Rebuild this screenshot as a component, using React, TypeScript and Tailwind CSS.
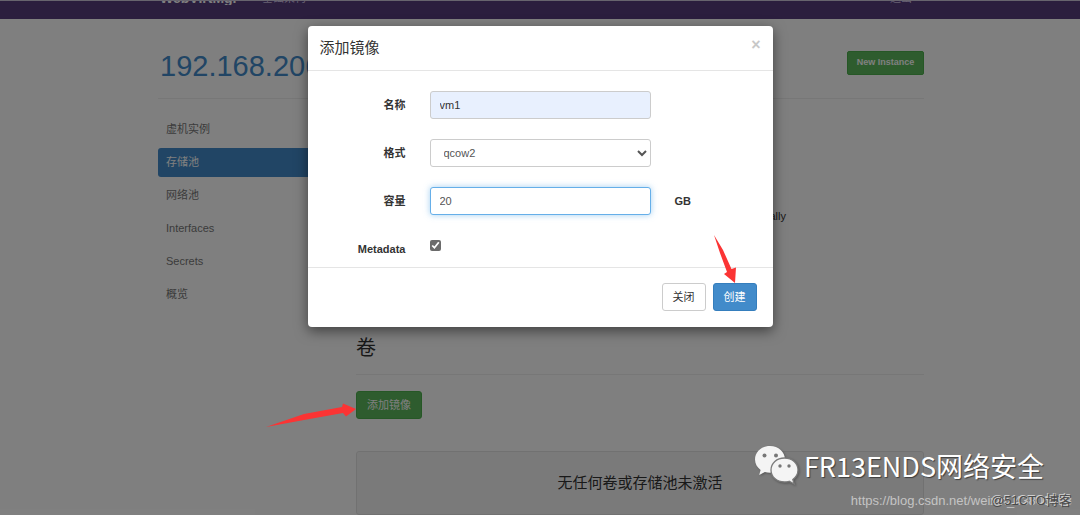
import type { ReactNode } from "react";

const sidebarItems = [
  { label: "虚机实例", active: false },
  { label: "存储池", active: true },
  { label: "网络池", active: false },
  { label: "Interfaces", active: false },
  { label: "Secrets", active: false },
  { label: "概览", active: false },
];

const NavBar = () => (
  <nav className="h-[19px] overflow-hidden border-t border-[#cfc9dd] bg-[#563d7c] pl-0.5">
    <div className="mx-auto flex h-1 max-w-[766px] items-end overflow-hidden text-[11px] leading-[14px] text-[#cdbfe3]">
      <a href="#" className="pl-0.5 text-sm leading-[14px] font-bold text-white">
        WebVirtMgr
      </a>
      <a href="#" className="ml-6">
        基础架构
      </a>
      <a href="#" className="mr-3 ml-auto">
        退出
      </a>
    </div>
  </nav>
);

const Sidebar = () => (
  <ul className="flex w-[174px] shrink-0 flex-col gap-1 pt-4">
    {sidebarItems.map(({ label, active }) => (
      <li key={label}>
        <a
          href="#"
          className={
            active
              ? "block rounded-[3px] bg-[#428bca] px-2 leading-[29px] text-white"
              : "block px-2 leading-[29px] text-[#777777]"
          }
        >
          {label}
        </a>
      </li>
    ))}
  </ul>
);

interface FieldRowProps {
  id: string;
  label: string;
  suffix?: string;
  children: ReactNode;
}

const FieldRow = ({ id, label, suffix, children }: FieldRowProps) => (
  <div className="flex h-7 items-center">
    <label htmlFor={id} className="w-[98px] text-right font-bold">
      {label}
    </label>
    <div className="ml-6 w-[221px]">{children}</div>
    {suffix && <span className="ml-6 font-bold">{suffix}</span>}
  </div>
);

const AddImageModal = () => (
  <div
    role="dialog"
    aria-labelledby="modal-title"
    className="w-[465px] rounded bg-white text-[#333333] shadow-[0_4px_13px_rgba(0,0,0,0.5)]"
  >
    <div className="flex h-[45px] items-start justify-between border-b border-[#e5e5e5] px-3 pt-3">
      <h4 id="modal-title" className="text-[15px] leading-5">
        添加镜像
      </h4>
      <button
        type="button"
        aria-label="关闭窗口"
        className="text-base leading-[14px] font-bold text-[#c8c8c8]"
      >
        ×
      </button>
    </div>

    <form>
      <div className="flex flex-col gap-5 pt-5 pb-1">
        <FieldRow id="name" label="名称">
          <input
            id="name"
            type="text"
            defaultValue="vm1"
            className="block h-7 w-full rounded-[3px] border border-[#cccccc] bg-[#e8f0fe] px-[9px] text-[#333333]"
          />
        </FieldRow>
        <FieldRow id="format" label="格式">
          <select
            id="format"
            defaultValue="qcow2"
            className="block h-7 w-full rounded-[3px] border border-[#cccccc] bg-white px-[9px] text-[#555555]"
          >
            <option>qcow2</option>
            <option>raw</option>
          </select>
        </FieldRow>
        <FieldRow id="size" label="容量" suffix="GB">
          <input
            id="size"
            type="text"
            defaultValue="20"
            className="block h-7 w-full rounded-[3px] border border-[#66afe9] bg-white px-[9px] text-[#555555] shadow-[0_0_6px_rgba(102,175,233,0.6)]"
          />
        </FieldRow>
        <FieldRow id="metadata" label="Metadata">
          <input
            id="metadata"
            type="checkbox"
            defaultChecked
            className="mb-2 block size-[11px] accent-[#6b6b6b]"
          />
        </FieldRow>
      </div>
      <div className="flex justify-end gap-[7px] border-t border-[#e5e5e5] px-4 pt-[15px] pb-4">
        <button
          type="button"
          className="h-7 w-11 rounded-[3px] border border-[#cccccc] bg-white"
        >
          关闭
        </button>
        <button
          type="button"
          className="h-7 w-11 rounded-[3px] border border-[#357ebd] bg-[#428bca] text-white"
        >
          创建
        </button>
      </div>
    </form>
  </div>
);

const Watermark = () => (
  <div className="absolute right-2 bottom-1 flex flex-col items-end gap-[5px]">
    <div className="mr-7 flex items-center gap-1 text-white">
      <svg width="46" height="40" viewBox="0 0 46 40" className="drop-shadow-[1px_1px_1px_rgba(0,0,0,0.3)]">
        <path
          d="M16 0C7.500 0 1 5.800 1 13.500c0 4.300 2.200 7.900 5.600 10.500L5.200 29l5.700-3c1.600.5 3.300.8 5.100.8 8.500 0 15-5.700 15-13.300S24.500 0 16 0z"
          fill="#f4f4f4"
        />
        <path
          d="M30.500 12C22.700 12 17 17.100 17 24s5.700 12 13.500 12c1.700 0 3.200-.2 4.700-.7l5 2.700-1.400-4.500C41.800 31.300 44 28 44 24c0-6.900-5.700-12-13.500-12z"
          fill="#f4f4f4"
          stroke="#7a7a7a"
          strokeWidth="1.300"
        />
        <g fill="#777777">
          <circle cx="10.500" cy="9.500" r="2" />
          <circle cx="22" cy="9.500" r="2" />
          <circle cx="26" cy="20" r="1.700" />
          <circle cx="35" cy="20" r="1.700" />
        </g>
      </svg>
      <span className="font-['Noto_Sans_CJK_SC',sans-serif] text-[27px] leading-10 [text-shadow:1px_1px_1px_rgba(0,0,0,0.5)]">
        FR13ENDS网络安全
      </span>
    </div>
    <div className="grid justify-items-end text-[13px] leading-5">
      <span className="col-start-1 row-start-1 text-[#c4c4c4]">
        https://blog.csdn.net/weixin_43806493
      </span>
      <span className="col-start-1 row-start-1 text-[#4a4a4a] [text-shadow:-1px_-1px_0_#d0d0d0]">
        @51CTO博客
      </span>
    </div>
  </div>
);

const App = () => (
  <div className="relative h-screen overflow-hidden bg-white font-['Liberation_Sans','Noto_Sans_CJK_SC',sans-serif] text-[11px] text-[#333333]">
    <NavBar />
    <div className="pl-0.5">
      <div className="mx-auto max-w-[766px]">
        <header className="flex h-20 items-start justify-between border-b border-[#eeeeee] pt-8">
          <h1 className="pl-0.5 text-[29px] leading-[30px] text-[#428bca]">192.168.206</h1>
          <button
            type="button"
            className="h-6 w-[77px] rounded-[2px] border border-[#4cae4c] bg-[#5cb85c] text-[9px] font-bold text-white"
          >
            New Instance
          </button>
        </header>
        <div className="flex gap-6">
          <Sidebar />
          <main className="min-w-0 flex-1">
            <p className="w-[430px] pt-[109px] text-right leading-4">Automatically</p>
            <h3 className="mt-28 border-b border-[#eeeeee] pb-3.5 text-xl leading-6">卷</h3>
            <button
              type="button"
              className="mt-4 h-7 w-[66px] rounded-[3px] border border-[#4cae4c] bg-[#5cb85c] text-white"
            >
              添加镜像
            </button>
            <div className="mt-8 flex h-16 items-center justify-center rounded-[3px] border border-[#e3e3e3] bg-[#f5f5f5] text-[15px]">
              无任何卷或存储池未激活
            </div>
          </main>
        </div>
      </div>
    </div>

    <div className="absolute inset-0 flex items-start justify-center bg-black/50 pt-[26px]">
      <AddImageModal />
    </div>

    {/* hand-drawn pointers to the two buttons */}
    <svg className="absolute top-[235px] left-[713px]" width="26" height="48" viewBox="0 0 26 48">
      <path d="M1 0L10 15 18.500 34 23 32.500 22 48 11 39 14 37 7 18z" fill="#fb3434" />
    </svg>
    <svg className="absolute top-[403px] left-[266px]" width="90" height="24" viewBox="0 0 90 24">
      <path d="M0 24L38 11 76 4 77 0.500 90 6 80 13.500 77 10 38 17z" fill="#fb3434" />
    </svg>
    <Watermark />
  </div>
);

export default App;
